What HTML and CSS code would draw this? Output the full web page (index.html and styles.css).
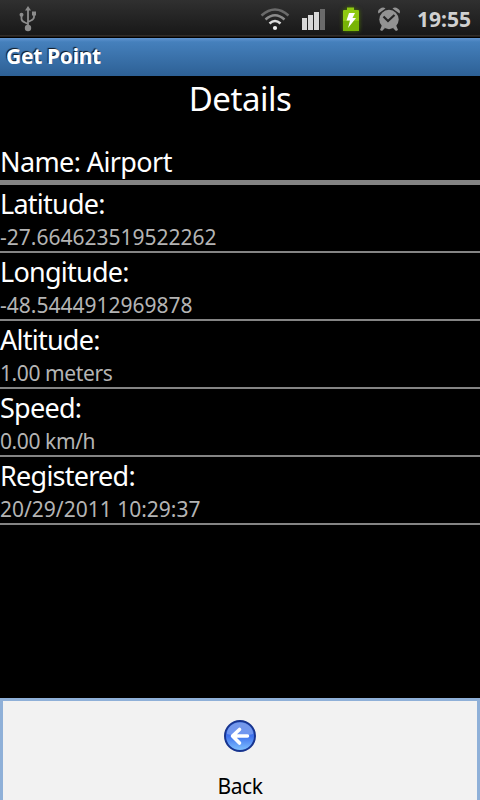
FILE: index.html
```
<!DOCTYPE html>
<html lang="en">
<head>
  <meta charset="UTF-8" />
  <meta name="viewport" content="width=device-width, initial-scale=1.0"/>
  <title>Get Point</title>
  <link rel="stylesheet" href="styles.css">
</head>
<body>

  <div class="status-bar">
    <svg class="usb" width="20" height="28" viewBox="0 0 20 28">
      <g fill="none" stroke="#8c8c8c" stroke-width="1.8">
        <path d="M10 4v18M3.500 11v3q0 2 3.500 3.500l3 1.500M16 9v3q0 2-3 3.500l-3 1.500" />
      </g>
      <g fill="#8c8c8c">
        <path d="M10 1l3 4.500H7z" />
        <circle cx="3.500" cy="9.800" r="2" />
        <rect x="14" y="6.500" width="4" height="4" />
        <circle cx="10" cy="23" r="3.200" />
      </g>
    </svg>
    <div class="status-icons">
      <svg class="wifi" width="30" height="24" viewBox="0 0 30 24">
        <g fill="none" stroke-width="2.500">
          <path d="M1.500 8.500q13.500-12 27 0" stroke="#6a6a6a" />
          <path d="M5.500 12.500q9.500-8.500 19 0" stroke="#8a8a8a" />
          <path d="M9.500 16.500q5.500-5 11 0" stroke="#dcdcdc" />
        </g>
        <circle cx="15" cy="21" r="2.100" fill="#eee" />
      </svg>
      <svg class="signal" width="24" height="22" viewBox="0 0 24 22">
        <rect x="0" y="10" width="5" height="12" fill="#d8d8d8" />
        <rect x="6" y="7" width="5" height="15" fill="#d8d8d8" />
        <rect x="12" y="4" width="5" height="18" fill="#d8d8d8" />
        <rect x="18" y="1" width="5" height="21" fill="#6a6a6a" />
      </svg>
      <svg class="battery" width="18" height="26" viewBox="0 0 18 26">
        <path d="M5 1.500h7v2.500h4q1 0 1 1v19q0 1-1 1H2q-1 0-1-1V5q0-1 1-1h3z" fill="#8fca10" />
        <path d="M1 15h16v9q0 1-1 1H2q-1 0-1-1z" fill="#78b406" />
        <path d="M7 7h6l-2.500 5H14L6 22l2-7.500H4.500z" fill="#fff" />
      </svg>
      <svg class="alarm" width="24" height="26" viewBox="0 0 24 26">
        <g fill="#939393">
          <path d="M1.500 7.500Q0 5 3 2.800T8.500 2.500zM22.500 7.500Q24 5 21 2.800T15.500 2.500z" />
          <circle cx="12" cy="13.500" r="9.700" />
          <path d="M5 19l3 3-3 3-2-1zM19 19l-3 3 3 3 2-1z" />
        </g>
        <path d="M6.500 10.500l4.500 4.500 6.500-6" fill="none" stroke="#262626" stroke-width="2.200" />
      </svg>
    </div>
    <span class="clock">19:55</span>
  </div>

  <div class="title-bar">Get Point</div>

  <div class="content">
    <h1>Details</h1>
    <div class="name">Name: Airport</div>
    <div class="row">
      <div class="label">Latitude:</div>
      <div class="value">-27.664623519522262</div>
    </div>
    <div class="row">
      <div class="label">Longitude:</div>
      <div class="value">-48.5444912969878</div>
    </div>
    <div class="row">
      <div class="label">Altitude:</div>
      <div class="value unit">1.00 meters</div>
    </div>
    <div class="row">
      <div class="label">Speed:</div>
      <div class="value unit">0.00 km/h</div>
    </div>
    <div class="row">
      <div class="label">Registered:</div>
      <div class="value">20/29/2011 10:29:37</div>
    </div>
  </div>

  <button class="back-btn">
    <svg width="34" height="34" viewBox="0 0 34 34">
      <defs>
        <linearGradient id="ball" x1="0" y1="0" x2="0" y2="1">
          <stop offset="0" stop-color="#4a78e0" />
          <stop offset="0.500" stop-color="#3f72ee" />
          <stop offset="1" stop-color="#82c4ff" />
        </linearGradient>
      </defs>
      <circle cx="17" cy="17" r="15" fill="url(#ball)" stroke="#17348f" stroke-width="2" />
      <path d="M4 15a13 11.500 0 0 1 26 0q-13 4-26 0z" fill="#fff" opacity="0.250" />
      <path d="M24.500 17H10M16.500 10.500L9.500 17l7 7" fill="none" stroke="#fff" stroke-width="3.600" stroke-linecap="round" stroke-linejoin="round" />
    </svg>
    <span>Back</span>
  </button>

</body>
</html>
```
FILE: styles.css
```
* {
  margin: 0;
  padding: 0;
  box-sizing: border-box;
  font-family: 'Noto Sans', 'Open Sans', sans-serif;
}

body {
  background: #000;
  color: white;
  height: 100vh;
  display: flex;
  flex-direction: column;
  overflow: hidden;
}

.status-bar {
  height: 38px;
  flex: none;
  display: flex;
  align-items: center;
  padding: 0 9px 0 18px;
  background: linear-gradient(to bottom, #303030, #181818 35px, #4a4038 36px, #000 37px);
}

.usb {
  margin-top: -1px;
}

.status-icons {
  display: flex;
  align-items: center;
  margin-left: auto;
}

.signal {
  margin-left: 12px;
}

.battery {
  margin-left: 16px;
  filter: drop-shadow(0 0 2px #4c7500);
}

.alarm {
  margin-left: 17px;
}

.clock {
  margin-left: 16px;
  width: 54px;
  font-size: 21px;
  font-weight: bold;
  line-height: 39px;
  color: #d0d0d0;
  white-space: nowrap;
}

.title-bar {
  height: 38px;
  flex: none;
  padding-left: 6px;
  font-size: 21px;
  font-weight: bold;
  letter-spacing: -0.3px;
  line-height: 36px;
  background: linear-gradient(to bottom, #6094d0, #4580bc 4px, #2d6095);
  text-shadow: -1px -1px 1px #101820;
}

.content {
  flex: 1;
}

h1 {
  height: 68px;
  font-size: 33px;
  font-weight: normal;
  letter-spacing: -0.5px;
  line-height: 46px;
  text-align: center;
}

.name {
  height: 41px;
  font-size: 27px;
  letter-spacing: -0.6px;
  line-height: 36px;
  border-bottom: 5px solid #848484;
}

.row {
  height: 68px;
  border-bottom: 2px solid #848484;
}

.label {
  font-size: 27px;
  letter-spacing: -0.75px;
  line-height: 38px;
}

.value {
  font-size: 21px;
  line-height: 29px;
  color: #b4b4b4;
}

.unit {
  letter-spacing: -0.4px;
}

.back-btn {
  height: 102px;
  flex: none;
  display: flex;
  flex-direction: column;
  align-items: center;
  padding-top: 18px;
  border: 3px solid #8fb0d8;
  border-bottom: none;
  background: #f2f2f2;
  color: #000;
  font-size: 21px;
  letter-spacing: -0.4px;
  cursor: pointer;
}

.back-btn span {
  margin-top: 19px;
  line-height: 28px;
}
```
